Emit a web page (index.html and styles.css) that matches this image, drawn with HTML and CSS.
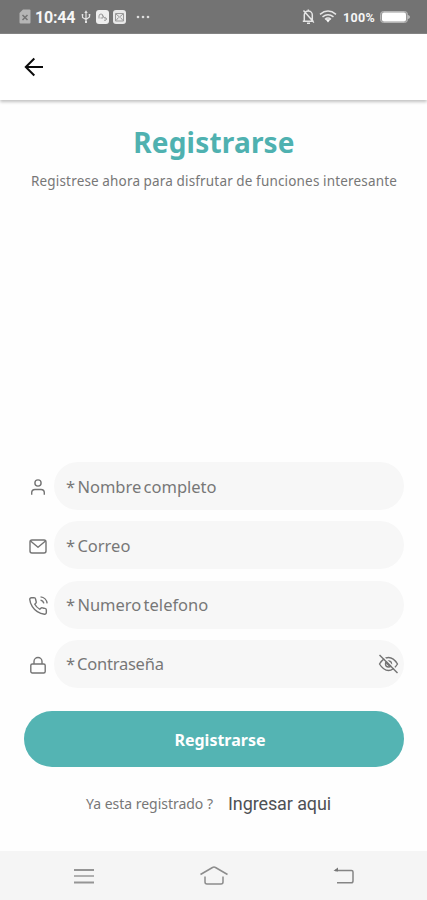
FILE: index.html
```html
<!DOCTYPE html>
<html lang="es">
<head>
<meta charset="utf-8">
<meta name="viewport" content="width=device-width, initial-scale=1">
<title>Registrarse</title>
<link rel="stylesheet" href="styles.css">
</head>
<body>
<div class="screen">
  <div class="status">
    <svg class="sim" width="12" height="15" viewBox="0 0 12 15"><path d="M4 .5h6.5a1 1 0 0 1 1 1v12a1 1 0 0 1-1 1h-9a1 1 0 0 1-1-1V4z" fill="#b5b5b5"/><path d="M3.5 6l5 5M8.500 6l-5 5" stroke="#737373" stroke-width="1.5"/></svg>
    <span class="clock">10:44</span>
    <svg class="usb" width="10" height="14" viewBox="0 0 10 14" fill="none" stroke="#e4e4e4" stroke-width="1.2"><path d="M5 2v10M1.500 5v2.500L5 9.500 8.500 7V4.500"/><path d="M3.300 3L5 .3 6.700 3zM4 11h2v2H4zM.7 4h1.600v1.500H.7zM7.700 4h1.600v1.500H7.700z" fill="#e4e4e4" stroke="none"/></svg>
    <svg class="app" width="13" height="14" viewBox="0 0 13 14" fill="none"><rect width="13" height="14" rx="3" fill="#eee"/><path d="M3 8.500V6a2 2 0 0 1 4 0v2H4.500M6 5l4 4.500M8.500 7.500a1.500 1.500 0 1 1-.5 2.500" stroke="#999"/></svg>
    <svg class="app2" width="13" height="14" viewBox="0 0 13 14" fill="none"><rect width="13" height="14" rx="3" fill="#e8e8e8"/><path d="M2.500 3.500h8v7.500h-8zM3 4l3.500 3L10 4M3 10.500l2.500-3M10 10.500l-2.500-3" stroke="#999"/></svg>
    <svg class="more" width="14" height="4" viewBox="0 0 14 4" fill="#ddd"><circle cx="2" cy="2" r="1.300"/><circle cx="7" cy="2" r="1.300"/><circle cx="12" cy="2" r="1.300"/></svg>
    <svg class="bell" width="13" height="16" viewBox="0 0 13 16" fill="none" stroke="#e6e6e6" stroke-width="1.500"><path d="M2.300 12V6a4 4 0 0 1 8 0v6M.8 12.300h11M1.500 1.500l10.500 12M5 14.300h3M6.300 2V.5"/></svg>
    <svg class="wifi" width="18" height="13" viewBox="0 0 18 13" fill="none" stroke="#e6e6e6" stroke-width="1.500"><path d="M1 4.300q8-6.600 16 0M3.500 6.900q5.500-4.500 11 0M6 9.300q3-2.500 6 0"/><path d="M6.500 9.300h5L9 12.500z" fill="#fff" stroke="none"/></svg>
    <span class="percent">100%</span>
    <svg class="battery" width="30" height="12" viewBox="0 0 30 12"><rect x=".5" y=".5" width="27" height="11" rx="3" fill="#989898" stroke="#b5b5b5"/><rect x="2" y="1.500" width="24" height="9" rx="2" fill="#fff"/><path d="M28.300 4v4q1.400-.5 1.400-2t-1.400-2" fill="#ddd"/></svg>
  </div>
  <header class="appbar">
    <svg width="20" height="20" viewBox="0 0 20 20" fill="none" stroke="#0b0b0b" stroke-width="2"><path d="M19 10H2M10.300 1.500L1.800 10l8.500 8.500"/></svg>
  </header>
  <main class="content">
    <h1>Registrarse</h1>
    <p class="subtitle">Registrese ahora para disfrutar de funciones interesante</p>
    <form class="fields">
      <label class="row">
        <svg class="icon" width="20" height="20" viewBox="0 0 20 20"><circle cx="10" cy="6" r="3.100"/><path d="M3.700 17.800v-2a3.300 3.300 0 0 1 3.300-3.300h6a3.300 3.300 0 0 1 3.300 3.300v2"/></svg>
        <span class="field"><span>* Nombre completo</span></span>
      </label>
      <label class="row">
        <svg class="icon" width="20" height="20" viewBox="0 0 20 20"><rect x="2" y="4" width="16" height="13" rx="2"/><path d="M2.500 5L10 11.300 17.500 5"/></svg>
        <span class="field"><span>* Correo</span></span>
      </label>
      <label class="row">
        <svg class="icon phone" width="20" height="20" viewBox="0 0 24 24"><path d="M15.050 5A5 5 0 0 1 19 8.950M15.050 1A9 9 0 0 1 23 8.940M22 16.920v3a2 2 0 0 1-2.180 2 19.790 19.790 0 0 1-8.630-3.070 19.500 19.500 0 0 1-6-6A19.790 19.790 0 0 1 2.120 4.180 2 2 0 0 1 4.110 2h3a2 2 0 0 1 2 1.720 12.840 12.840 0 0 0 .7 2.810 2 2 0 0 1-.45 2.110L8.090 9.910a16 16 0 0 0 6 6l1.270-1.270a2 2 0 0 1 2.110-.45 12.840 12.840 0 0 0 2.810.7A2 2 0 0 1 22 16.920z"/></svg>
        <span class="field"><span>* Numero telefono</span></span>
      </label>
      <label class="row">
        <svg class="icon" width="20" height="20" viewBox="0 0 20 20"><rect x="2.800" y="9" width="14.400" height="9" rx="1.500"/><path d="M6 9V6.500a4 4 0 0 1 8 0V9"/></svg>
        <span class="field"><span class="password">* Contraseña</span>
          <svg class="eye" width="21" height="20" viewBox="0 0 21 20"><path d="M1.500 10Q5.500 3.500 10.500 3.500T19.500 10Q15.500 16.500 10.500 16.500T1.500 10z"/><circle cx="10.500" cy="10" r="3"/><path d="M8.500 8l4 4" stroke-width="3"/><path class="gap" d="M2.800 .3l17 17"/><path d="M1.500 1l18 18"/></svg>
        </span>
      </label>
    </form>
    <button class="submit">Registrarse</button>
    <div class="login"><span class="ask">Ya esta registrado ?</span><a class="link">Ingresar aqui</a></div>
  </main>
  <nav class="nav">
    <svg width="20" height="16" viewBox="0 0 20 16" fill="none" stroke-width="2"><path d="M0 2h20M0 14.500h20" stroke="#959595"/><path d="M0 8h20" stroke="#b0b0b0"/></svg>
    <svg class="home" width="28" height="20" viewBox="0 0 28 20" fill="none" stroke="#8c8c8c" stroke-width="1.500"><path d="M.5 8.500L12.500 1.500q1.500-.8 3 0L27.500 8.500M5 10.500v5.500q0 2 2 2h14q2 0 2-2v-5.500"/></svg>
    <svg width="22" height="18" viewBox="0 0 22 18" fill="none" stroke="#858585" stroke-width="1.500"><path d="M2 3.500h16.500q1.500 0 1.500 1.500V14q0 1.800-1.800 1.800H4"/><path d="M.5 3.800L5 .5v3.900z" fill="#777" stroke="none"/></svg>
  </nav>
</div>
</body>
</html>
```
FILE: styles.css
```css
* { box-sizing: border-box; }
body { margin: 0; background: #fefefe; font-family: "Noto Sans", sans-serif; }
svg { display: block; flex: none; }
.screen { width: 427px; height: 900px; display: flex; flex-direction: column; overflow: hidden; }

.status { height: 34px; flex: none; background: #737373; color: #f6f6f6; display: flex; align-items: center; padding: 0 17px 0 19px; border-bottom: 1px solid #858585; font-family: Roboto, sans-serif; white-space: nowrap; }
.clock { width: 40px; margin-left: 4px; padding-top: 1px; font-size: 16px; font-weight: 700; letter-spacing: -.2px; }
.usb { margin-left: 6px; }
.app { margin-left: 5px; }
.app2 { margin-left: 4px; }
.more { margin-left: 10px; }
.bell { margin-left: auto; }
.wifi { margin-left: 4px; margin-right: 1px; }
.percent { width: 33px; margin-left: 5px; padding-top: 1px; font-size: 12.5px; font-weight: 700; letter-spacing: .3px; }
.battery { margin-left: 4px; }

.appbar { height: 66px; flex: none; background: #fff; display: flex; align-items: center; padding-left: 24px; box-shadow: 0 2px 3px rgba(0, 0, 0, .24); }

.content { flex: 1; padding: 0 23px 0 24px; display: flex; flex-direction: column; }
h1 { margin: 21px 0 0; height: 42px; line-height: 42px; text-align: center; font-size: 28px; font-weight: 700; letter-spacing: .2px; color: #4fb1b0; }
.subtitle { margin: 8px 0 0; height: 20px; line-height: 20px; text-align: center; font-size: 13.5px; letter-spacing: .17px; word-spacing: -.2px; color: #777; white-space: nowrap; }
.fields { margin-top: 271px; display: flex; flex-direction: column; gap: 11px; }
.row { height: 48.25px; display: flex; align-items: center; gap: 6px; padding-left: 4px; }
.icon, .eye { fill: none; stroke: #747474; stroke-width: 1.400; stroke-linejoin: round; }
.icon { position: relative; top: 1px; }
.icon.phone { stroke-width: 1.700; }
.eye .gap { stroke: #f7f7f7; stroke-width: 1.500; }
.field { flex: 1; height: 48px; border-radius: 24px; background: #f7f7f7; display: flex; align-items: center; justify-content: space-between; padding: 0 5px 0 12px; font-size: 16.5px; word-spacing: -2px; color: #777; white-space: nowrap; }
.password { letter-spacing: -.22px; }
.submit { height: 56px; flex: none; margin: 23px 0 0; padding: 2px 0 0 12px; border: 0; border-radius: 28px; background: #54b4b3; color: #fff; font: 700 16px "Noto Sans", sans-serif; }
.login { margin-top: 24px; height: 26px; line-height: 26px; display: flex; align-items: center; padding-left: 62px; white-space: nowrap; }
.ask { width: 142px; font-size: 14px; letter-spacing: -.02px; color: #777; }
.link { font-family: Roboto, sans-serif; font-size: 18px; letter-spacing: -.1px; color: #4e5155; }

.nav { height: 49px; flex: none; background: #f5f5f5; display: flex; align-items: center; justify-content: space-between; padding: 0 72px 0 74px; }
```
